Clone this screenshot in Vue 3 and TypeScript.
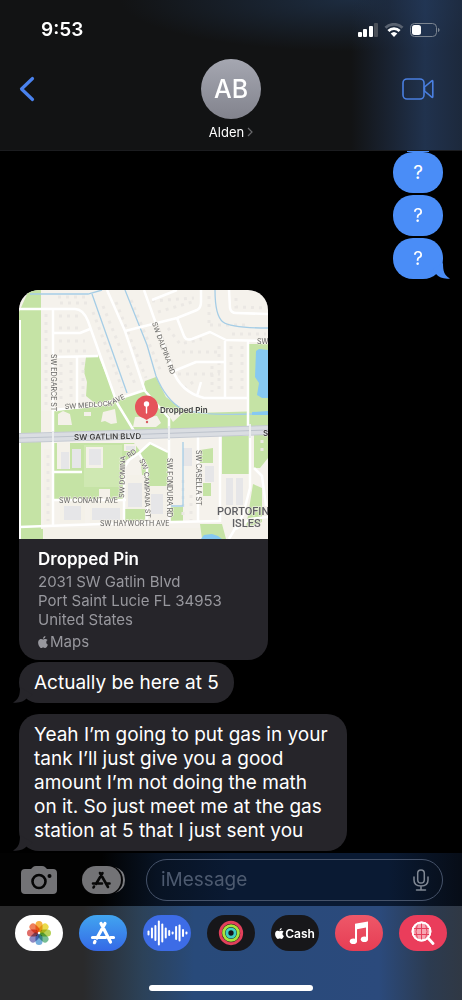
<script setup lang="ts">
import { ref } from 'vue'

interface Message {
  id: number
  text: string
  tail: boolean
}

const sent: Message[] = [
  { id: 1, text: '?', tail: false },
  { id: 2, text: '?', tail: false },
  { id: 3, text: '?', tail: true },
]

const received: Message[] = [
  { id: 4, text: 'Actually be here at 5', tail: true },
  {
    id: 5,
    text: 'Yeah I’m going to put gas in your tank I’ll just give you a good amount I’m not doing the math on it. So just meet me at the gas station at 5 that I just sent you',
    tail: true,
  },
]

const draft = ref('')

const petals = [
  { angle: 0, color: '#f5a623' },
  { angle: 45, color: '#e8d32c' },
  { angle: 90, color: '#a8c93a' },
  { angle: 135, color: '#5fb383' },
  { angle: 180, color: '#5b9fd6' },
  { angle: 225, color: '#7b76b8' },
  { angle: 270, color: '#d9534f' },
  { angle: 315, color: '#ec6a3d' },
]

const waveHeights = [5, 11, 16, 25, 19, 11, 6, 3, 14, 17, 8, 3]

const applePath =
  'M12.152 6.896c-.948 0-2.415-1.078-3.96-1.04-2.04.027-3.91 1.183-4.961 3.014-2.117 3.675-.546 9.103 1.519 12.09 1.013 1.454 2.208 3.09 3.792 3.039 1.52-.065 2.09-.987 3.935-.987 1.831 0 2.35.987 3.96.948 1.637-.026 2.676-1.48 3.676-2.948 1.156-1.688 1.636-3.325 1.662-3.415-.039-.013-3.182-1.221-3.22-4.857-.026-3.04 2.48-4.494 2.597-4.559-1.429-2.09-3.623-2.324-4.39-2.376-2-.156-3.675 1.09-4.61 1.09zM15.53 3.83c.843-1.012 1.4-2.427 1.245-3.83-1.207.052-2.662.805-3.532 1.818-.78.896-1.454 2.338-1.273 3.714 1.338.104 2.715-.688 3.559-1.701'
</script>

<template>
  <div class="phone">
    <header class="top">
      <div class="status">
        <time class="clock">9:53</time>
        <div class="indicators">
          <svg width="20" height="14" viewBox="0 0 20 14" fill="#fff" aria-label="Signal">
            <rect x="0" y="9" width="4" height="5" rx="1" />
            <rect x="5" y="6" width="4" height="8" rx="1" />
            <rect x="11" y="3" width="4" height="11" rx="1" />
            <rect x="16" y="0" width="4" height="14" rx="1" fill="#4b5058" />
          </svg>
          <svg width="20" height="14" viewBox="0 0 20 14" fill="none" aria-label="Wi-Fi">
            <path d="M1.500 4.800a12 12 0 0 1 17 0" stroke="#596270" stroke-width="2.800" />
            <path d="M4.400 8a8 8 0 0 1 11.200 0" stroke="#fff" stroke-width="2.800" />
            <path d="M10 14l-3.300-3.400a4.800 4.800 0 0 1 6.600 0z" fill="#fff" />
          </svg>
          <svg width="30" height="14" viewBox="0 0 30 14" fill="none" aria-label="Battery">
            <rect x="0.500" y="0.500" width="26" height="13" rx="4" stroke="#7c8590" />
            <rect x="2" y="2" width="9" height="10" rx="2.500" fill="#fff" />
            <path d="M28 5c2 .5 2 3.500 0 4z" fill="#7c8590" />
          </svg>
        </div>
      </div>
      <div class="nav">
        <button class="icon-button back" type="button" aria-label="Back">
          <svg width="16" height="26" viewBox="0 0 16 26" fill="none">
            <path d="M13.500 2.500L2.500 13l11 10.500" stroke="#4a82ee" stroke-width="3.200" stroke-linecap="round" stroke-linejoin="round" />
          </svg>
        </button>
        <button class="contact" type="button">
          <span class="avatar">AB</span>
          <span class="name">
            Alden
            <svg width="6" height="10" viewBox="0 0 6 10" fill="none">
              <path d="M1 1l4 4-4 4" stroke="#6a6a6e" stroke-width="1.200" />
            </svg>
          </span>
        </button>
        <button class="icon-button video" type="button" aria-label="FaceTime">
          <svg width="32" height="22" viewBox="0 0 32 22" fill="none" stroke="#4a7fe0" stroke-width="1.600" stroke-linejoin="round">
            <rect x="1" y="1" width="21" height="20" rx="4" />
            <path d="M22.500 9l7.300-6.200q1-.7 1 .6v15.200q0 1.300-1 .6l-7.300-6.200z" />
          </svg>
        </button>
      </div>
    </header>

    <main class="thread">
      <div class="sliver"></div>
      <div class="sent-group">
        <p v-for="m in sent" :key="m.id" class="bubble sent">
          {{ m.text }}
          <svg v-if="m.tail" class="tail tail-right" width="20" height="16" viewBox="0 0 20 16">
            <path d="M13 0c0 8 1 12 7 15.500c-6 .8-11-1-14-4.500L0 8z" fill="#4a8df7" />
          </svg>
        </p>
      </div>

      <a class="card" href="#map">
        <svg class="map" viewBox="19 290 249 249" role="img" aria-label="Map">
          <rect x="19" y="290" width="249" height="249" fill="#f5f2ec" />

          <g fill="#c5e3a5">
            <path d="M29 290h12v249H19V312z" />
            <path d="M86 357l12-2 18 44-20 5-10-8 1-14-3-10z" />
            <path d="M54 411l46-5 42-15 3-10 11-4 10 20 16 12 12 4 74-2v21l-214 7z" />
            <path d="M54 443h80l6 8-15 10v39H54z" />
            <path d="M140 452l10-9 18 9v34h-25z" />
            <path d="M249 344h19v70h-19z" />
            <path d="M222 436h27v38h-27z" />
            <path d="M254 435h14v23l-8 10h-6zM253 484l9 4v34l-16 6z" />
            <path d="M200 450l13-2v15h-13zM203 483h8v13h-8zM171 507h12v14h-12zM200 524h22l4 15h-24zM125 509h20v12h-20z" />
            <path d="M19 529h24v10H19z" />
          </g>
          <path d="M84 445h38v42H84z" fill="#cfe8b2" />

          <g fill="#f4f1e9">
            <path d="M41 411h12v21H41zM44 449h9v75H44z" />
            <path d="M58 414l5-3 7 3 2 11H58zM84 412h7v4h-7zM103 412l12-3 2 14-6 1-6-3-4 1z" />
            <path d="M57 443h13v26H57zM86 447h17v21H86zM124 444h12v7h-12z" />
            <path d="M60 502h25v21H60zM90 500h9v-11h11v11h13v23H90z" />
            <path d="M127 475h18v34h-18zM148 486h20v36h-20z" />
            <path d="M135 417l22-1 4 7-5 4h-23zM164 408l19 5-10 9z" />
            <path d="M44 528h156v11H44z" />
          </g>

          <g fill="#e6e6e8">
            <path d="M61 452h8v17h-8zM72 449h9v19h-9zM89 449h12v16H89zM126 446h9v4h-9zM128 483h14v24h-14zM205 466h9v16h-9zM196 472h6v15h-6zM226 478h7v27h-7zM236 478h7v27h-7zM64 506h17v14H64zM92 508h28v12H92zM151 494h12v20h-12zM183 448h9v18h-9z" />
          </g>

          <!-- house footprints along the streets -->
          <g stroke="#ebe8e4" stroke-width="3" stroke-dasharray="3 5" fill="none">
            <path d="M46 314v96M59 316h20M59 328h22M59 341h26M59 351h30M61 364v36M71 362v40M83 362v40" />
            <path d="M58 297h30M60 303h30M93 312l29 76M103 306l32 78M116 302l30 76M131 300l30 72" />
            <path d="M152 301l42-3M158 312l34-10M159 330l16 40M168 328l12 16 22-5M182 352h38M178 374h42M193 382l-8 6M212 366v26M219 346v48M231 346v48M242 346v48M209 296v28M236 298v9l30 1M232 334h34M210 325h40" />
            <path d="M183 480v40M191 495v25M48 455v66M262 440v14" />
          </g>

          <g fill="#86c9f2">
            <path d="M256 351l3-2 9 1v48h-6l-5-3 2-12-4-6zM252 412l16-1v4h-16z" />
            <path d="M201 539l3-4 8-1 6 2 4 3z" />
          </g>
          <g stroke="#a5cde6" stroke-width="1.300" fill="none">
            <path d="M30 294h58l14-4M92 294l35 99M125 290l22 55 9 31q10 24 26 33 20 7 70 5" />
            <path d="M215 290q0 26 8 32 8 6 45 6M183 442v64h-12" />
          </g>

          <g stroke="#fff" stroke-width="2.500" fill="none" stroke-linejoin="round">
            <path d="M19 309h56q8 0 13 12l29 82 17 28" />
            <path d="M20 320v219" stroke-width="2" />
            <path d="M53 310v216M54 333h26l10-4M54 357l44-1M77 357v52" />
            <path d="M107 290l18 41 20 60 24 27v102M125 331l52-13 20-8q4-2 4-8v-12M152 300l25-10" />
            <path d="M144 290l10 28 18 50q8 24 32 30h44" />
            <path d="M177 318l7 18q2 5 8 3l18-7 16 8 42 1M229 290l1 18q1 5 6 5l32 1" />
            <path d="M174 371l22-9h28M225 341v57M248 341v90M201 382l-4 14" />
            <path d="M54 410l46-5 45-15" />
            <path d="M198 433v89M220 432v90M54 472h28M54 500h72" />
            <path d="M139 453l11-10 18 9M139 453l-10 7-5 8v54M139 453l8 15v52" />
            <path d="M254 468l8 8 4 30M250 432v56l-7 27-14 24M236 529l14-10 18-2" />
            <path d="M19 527l110-4 91-2" />
          </g>

          <g fill="none">
            <path d="M19 438l130-4 119-4" stroke="#c5cad2" stroke-width="10" />
            <path d="M19 438l130-4 119-4" stroke="#dadde2" stroke-width="8" />
            <path d="M19 438l130-4 119-4" stroke="#bdc3cc" stroke-width="1" />
            <path d="M53 431v11M169 426v14M250 424v14" stroke="#eceef0" stroke-width="2" />
          </g>

          <g class="street">
            <text transform="translate(51 354) rotate(90)">SW EDGARCE ST</text>
            <text transform="translate(152 323) rotate(70)">SW DALPINA RD</text>
            <text transform="translate(65 409) rotate(-4)">SW MEDLOCK</text>
            <text transform="translate(113 404) rotate(-24)">AVE</text>
            <text x="257" y="344">SW</text>
            <text x="59" y="503">SW CONANT AVE</text>
            <text x="100" y="526">SW HAYWORTH AVE</text>
            <text transform="translate(124 498) rotate(-88)">SW DOMINA</text>
            <text transform="translate(129 458) rotate(-35)">RD</text>
            <text transform="translate(139 460) rotate(65)">SW</text>
            <text transform="translate(144 472) rotate(88)">CAMPANA ST</text>
            <text transform="translate(167 458) rotate(90)">SW FONDURA RD</text>
            <text transform="translate(196 450) rotate(90)">SW CASELLA ST</text>
          </g>
          <g class="avenue">
            <text transform="translate(74 440) rotate(-1)">SW GATLIN BLVD</text>
            <text x="263" y="436">S</text>
          </g>
          <g class="district">
            <text x="217" y="515">PORTOFIN</text>
            <text x="232" y="527">ISLES</text>
          </g>

          <circle cx="147" cy="422" r="1.200" fill="#d85c60" />
          <path d="M135 407a11.500 11.500 0 1 1 23 0c0 6-4 10-8.500 11.200L146.500 420l-3-1.800C139 417 135 413 135 407z" fill="#e5545a" />
          <circle cx="146.500" cy="404" r="2.700" fill="#fff" />
          <path d="M146.500 406v7" stroke="#fff" stroke-width="1.400" stroke-linecap="round" />
          <text class="pin-label" x="160" y="413">Dropped Pin</text>
        </svg>
        <span class="place">
          <strong class="place-title">Dropped Pin</strong>
          <span class="address">2031 SW Gatlin Blvd</span>
          <span class="address">Port Saint Lucie FL 34953</span>
          <span class="address">United States</span>
          <span class="source">
            <svg width="10" height="12" viewBox="2 0 20 24" fill="#98989e"><path :d="applePath" /></svg>Maps
          </span>
        </span>
      </a>

      <p v-for="m in received" :key="m.id" class="bubble received">
        {{ m.text }}
        <svg v-if="m.tail" class="tail tail-left" width="20" height="16" viewBox="0 0 20 16">
          <path d="M7 0c0 8-1 12-7 15.500c6 .8 11-1 14-4.500L20 8z" fill="#26252a" />
        </svg>
      </p>
    </main>

    <footer class="bottom">
      <form class="composer" @submit.prevent>
        <button class="icon-button" type="button" aria-label="Camera">
          <svg width="36" height="28" viewBox="0 0 36 28">
            <path d="M4 3h6l2-2q1-1 3-1h6q2 0 3 1l2 2h6q4 0 4 4v17q0 4-4 4H4q-4 0-4-4V7q0-4 4-4z" fill="#737376" />
            <circle cx="18" cy="15.500" r="6.500" fill="none" stroke="#050505" stroke-width="2.600" />
            <circle cx="28.500" cy="10" r="2" fill="#050505" />
          </svg>
        </button>
        <button class="icon-button apps" type="button" aria-label="Apps">
          <svg width="44" height="28" viewBox="0 0 44 28">
            <path d="M33 1q10 3 10 13t-10 13" fill="#7b7c80" />
            <rect x="-1" y="-1" width="42" height="30" rx="15" fill="#060607" />
            <rect width="39" height="28" rx="14" fill="#737376" />
            <g stroke="#080808" stroke-width="2.600" stroke-linecap="round" fill="none">
              <path d="M18 7l8 14M20.500 7l-6.500 11M11 17.500h9M24.500 17.500h3M12 20.500l-.5 1" />
            </g>
          </svg>
        </button>
        <div class="field">
          <input v-model="draft" type="text" placeholder="iMessage" aria-label="iMessage" />
          <button class="icon-button" type="button" aria-label="Dictate">
            <svg width="16" height="22" viewBox="0 0 16 22" fill="none" stroke="#808894" stroke-width="1.500" stroke-linecap="round">
              <rect x="4.700" y="1" width="6.600" height="13" rx="3.300" />
              <path d="M1 8v3q0 6 7 6t7-6V8M8 17v4M3.500 21h9" />
            </svg>
          </button>
        </div>
      </form>

      <nav class="strip" aria-label="iMessage apps">
        <button class="app photos" type="button" aria-label="Photos">
          <svg class="flower" width="26" height="26" viewBox="-13 -13 26 26">
            <rect
              v-for="p in petals"
              :key="p.angle"
              x="-3.500"
              y="-12"
              width="7"
              height="11"
              rx="3.500"
              :fill="p.color"
              fill-opacity="0.850"
              :transform="`rotate(${p.angle})`"
            />
          </svg>
        </button>
        <button class="app store" type="button" aria-label="App Store">
          <svg width="26" height="24" viewBox="0 0 26 24" stroke="#fff" stroke-width="3.200" stroke-linecap="round" fill="none">
            <path d="M11 2.500l9.500 18.500M15 2.500L7 17M2.500 16.500h13M20.500 16.500h3M5 20.500l-.6 1.200" />
          </svg>
        </button>
        <button class="app audio" type="button" aria-label="Audio messages">
          <svg width="41" height="26" viewBox="0 0 41 26" fill="#fff">
            <rect
              v-for="(h, i) in waveHeights"
              :key="i"
              :x="0.5 + i * 3.45"
              :y="13 - h / 2"
              width="2"
              :height="h"
              rx="1"
            />
          </svg>
        </button>
        <button class="app fitness" type="button" aria-label="Fitness">
          <svg width="26" height="26" viewBox="0 0 26 26" fill="none" stroke-width="2.900">
            <circle cx="13" cy="13" r="10.700" stroke="#e2405a" />
            <circle cx="13" cy="13" r="7.400" stroke="#a8e43c" />
            <circle cx="13" cy="13" r="4.100" stroke="#3fd0c4" />
          </svg>
        </button>
        <button class="app cash" type="button">
          <svg width="9" height="11" viewBox="2 0 20 24" fill="#fff"><path :d="applePath" /></svg>Cash
        </button>
        <button class="app music" type="button" aria-label="Music">
          <svg width="20" height="24" viewBox="0 0 20 24" fill="#fff">
            <path d="M6 2.800L19 .5V18h-2V6.500L8 8.200V20H6z" />
            <ellipse cx="4.400" cy="20.300" rx="3.600" ry="2.800" />
            <ellipse cx="15.400" cy="18.300" rx="3.600" ry="2.800" />
          </svg>
        </button>
        <button class="app images" type="button" aria-label="Image search">
          <svg width="24" height="24" viewBox="0 0 24 24" fill="none" stroke="#fff">
            <circle cx="10.500" cy="10.500" r="9" stroke-width="1.800" fill="#f7a5b2" />
            <path d="M2 7.500h17M2 13.500h17M10.500 2v17M6.500 2.500q-3 8 0 16M14.500 2.500q3 8 0 16" stroke="#e53e5b" stroke-width="1" />
            <circle cx="10.500" cy="10.500" r="9" stroke-width="1.800" />
            <path d="M17 17l5 5.500" stroke-width="2.800" stroke-linecap="round" />
          </svg>
        </button>
      </nav>
      <div class="home"></div>
    </footer>
  </div>
</template>

<style>
body {
  background: #000;
}
</style>

<style scoped>
.phone {
  display: flex;
  flex-direction: column;
  min-height: 100vh;
  background: #000;
  color: #fff;
  font-family: Inter, "Liberation Sans", sans-serif;
}

button {
  margin: 0;
  padding: 0;
  border: 0;
  background: none;
  color: inherit;
  font: inherit;
  cursor: pointer;
}

svg {
  display: block;
  flex: none;
}

.icon-button {
  display: flex;
  align-items: center;
}

.top {
  border-bottom: 1px solid #1b1c1f;
  background:
    linear-gradient(to right, transparent 76%, rgba(30, 44, 67, 0.6) 84%, rgba(36, 58, 92, 0.8) 92%, rgba(31, 46, 70, 0.8) 100%),
    radial-gradient(ellipse 50% 34% at 76% 0, #1d2c40, transparent),
    #121314;
}

.status {
  display: flex;
  justify-content: space-between;
  align-items: center;
  height: 59px;
  padding: 0 22px 0 41px;
}

.clock {
  font-size: 19px;
  font-weight: 600;
}

.indicators {
  display: flex;
  gap: 6px;
}

.nav {
  display: grid;
  grid-template-columns: 1fr auto 1fr;
  height: 91px;
}

.back {
  align-self: start;
  justify-self: start;
  height: 60px;
  padding-left: 19px;
}

.video {
  align-self: start;
  justify-self: end;
  height: 60px;
  padding-right: 28px;
}

.contact {
  display: flex;
  flex-direction: column;
  align-items: center;
  align-self: start;
  gap: 5px;
}

.avatar {
  display: grid;
  place-items: center;
  width: 60px;
  height: 60px;
  border-radius: 50%;
  background: linear-gradient(#a5a7b1, #82838d);
  font-size: 25px;
  font-weight: 500;
}

.name {
  display: flex;
  align-items: center;
  gap: 3px;
  font-size: 13px;
  line-height: 16px;
}

.thread {
  display: flex;
  flex: 1;
  flex-direction: column;
  align-items: flex-start;
  padding: 0 19px 2px;
}

.sliver {
  align-self: flex-end;
  width: 22px;
  height: 1px;
  margin-right: 14px;
  background: #4a8df7;
}

.sent-group {
  display: flex;
  flex-direction: column;
  align-self: flex-end;
  gap: 2px;
  margin-bottom: 11px;
}

.bubble {
  position: relative;
  margin: 0;
  padding: 9px 15px 8px;
  border-radius: 20px;
  font-size: 19px;
  line-height: 24px;
}

.sent {
  width: 50px;
  padding-right: 0;
  padding-left: 0;
  background: #4a8df7;
  text-align: center;
}

.received {
  max-width: 298px;
  margin-top: 11px;
  background: #26252a;
}

.card + .received {
  margin-top: 2px;
}

.tail {
  position: absolute;
  bottom: 0;
}

.tail-left {
  left: -6px;
}

.tail-right {
  right: -7px;
}

.card {
  display: block;
  width: 249px;
  border-radius: 20px;
  overflow: hidden;
  background: #26252a;
  color: #98989e;
  text-decoration: none;
}

.map {
  width: 100%;
}

.street {
  fill: #666;
  stroke: #f4f1e9;
  stroke-width: 1px;
  paint-order: stroke;
  font-size: 7px;
}

.avenue {
  fill: #404040;
  stroke: #e6e8ea;
  stroke-width: 1px;
  paint-order: stroke;
  font-size: 8px;
  font-weight: 600;
}

.district {
  fill: #5f5f64;
  stroke: #f4f1e9;
  stroke-width: 1px;
  paint-order: stroke;
  font-family: Roboto, sans-serif;
  font-size: 11px;
  font-weight: 500;
}

.pin-label {
  fill: #3d3d3f;
  stroke: #f0f2e6;
  stroke-width: 1px;
  paint-order: stroke;
  font-size: 8px;
  font-weight: 600;
}

.place {
  display: flex;
  flex-direction: column;
  padding: 9px 19px;
  font-size: 15px;
  line-height: 19px;
}

.place-title {
  margin-bottom: 2px;
  color: #fff;
  font-size: 17px;
  font-weight: 600;
  line-height: 22px;
}

.source {
  display: flex;
  align-items: center;
  gap: 2px;
  margin-top: 3px;
}

.bottom {
  background: linear-gradient(to right, #2a2a2b 18%, #2c4259 31%, #284a7a 42%, #2b4a7c 82%, #2c3b50 93%, #303844 100%);
}

.composer {
  display: flex;
  align-items: center;
  height: 53px;
  padding: 0 19px 0 21px;
  background: linear-gradient(to right, #020202 22%, #081323 34%, #0a1a33 50%, #0a1a33 84%, #070d17 100%);
}

.apps {
  margin-left: 25px;
}

.field {
  display: flex;
  flex: 1;
  align-items: center;
  box-sizing: border-box;
  min-width: 0;
  height: 42px;
  margin-left: 20px;
  padding: 0 13px 0 14px;
  border: 1px solid #46536a;
  border-radius: 21px;
}

.field input {
  flex: 1;
  min-width: 0;
  padding: 0;
  border: 0;
  outline: 0;
  background: none;
  color: #fff;
  font: inherit;
  font-size: 19px;
}

.field input::placeholder {
  color: #4d5a6f;
  opacity: 1;
}

.strip {
  display: flex;
  justify-content: space-between;
  padding: 9px 15px 0;
}

.app {
  display: flex;
  align-items: center;
  justify-content: center;
  width: 48px;
  height: 36px;
  border-radius: 18px;
}

.photos {
  background: #fff;
}

.flower rect {
  mix-blend-mode: multiply;
}

.store {
  background: linear-gradient(#41a5f0, #3569e6);
}

.audio {
  background: #3d6ce6;
}

.fitness,
.cash {
  background: #17171a;
}

.cash {
  gap: 1px;
  font-size: 12px;
  font-weight: 600;
}

.music {
  background: linear-gradient(#ee5869, #e63d54);
}

.images {
  background: #ea3d5b;
}

.home {
  width: 164px;
  height: 6px;
  margin: 34px auto 9px;
  border-radius: 3px;
  background: #fff;
}
</style>
